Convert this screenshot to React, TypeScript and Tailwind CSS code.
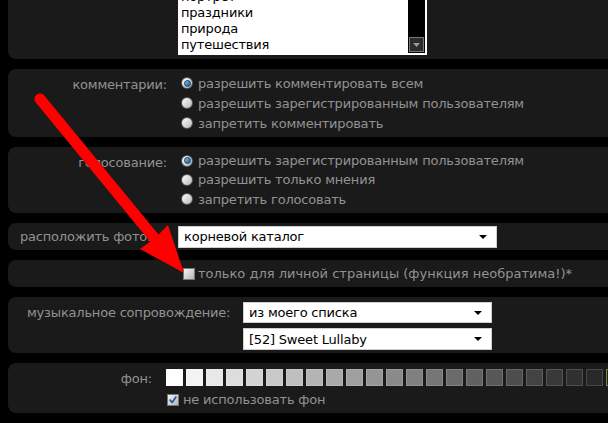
import React from "react";

const swatches = [
  "#ffffff", "#f3f3f3", "#e8e8e8", "#dddddd", "#d3d3d3", "#c9c9c9", "#bfbfbf", "#b4b4b4",
  "#a9a9a9", "#9f9f9f", "#959595", "#8a8a8a", "#808080", "#767676", "#6b6b6b", "#616161",
  "#575757", "#4d4d4d", "#434343", "#393939", "#303030", "#292929",
];

const Radio = ({ checked = false }: { checked?: boolean }) => (
  <span className="relative inline-flex h-[12px] w-[12px] shrink-0 items-center justify-center rounded-full border border-[#555] bg-gradient-to-br from-white to-[#b8b8b8]">
    {checked && (
      <span className="h-[7px] w-[7px] rounded-full border border-[#0c3d66] bg-gradient-to-br from-[#7cc3f0] to-[#1c5d98]" />
    )}
  </span>
);

const Check = ({ checked = false }: { checked?: boolean }) => (
  <span className="inline-flex h-[12px] w-[12px] shrink-0 items-center justify-center border border-[#777] bg-gradient-to-br from-[#f4f4f4] to-[#b5b5b5]">
    {checked && (
      <svg viewBox="0 0 12 12" className="h-[10px] w-[10px]">
        <path d="M2.5 6.2 L5 9 L9.5 2.5" fill="none" stroke="#2a4fa8" strokeWidth={2} strokeLinecap="round" strokeLinejoin="round" />
      </svg>
    )}
  </span>
);

const Select = ({ value, className }: { value: string; className: string }) => (
  <div className={`flex shrink-0 items-center justify-between border border-[#cfcfcf] bg-white pl-[5px] pr-[9px] text-[13px] text-black ${className}`}>
    <span>{value}</span>
    <svg viewBox="0 0 8 4" className="h-[4px] w-[8px]">
      <path d="M0 0 H8 L4 4 Z" fill="#000" />
    </svg>
  </div>
);

const RadioRow = ({ text, checked }: { text: string; checked?: boolean }) => (
  <div className="flex h-[20px] items-center gap-[5px] whitespace-nowrap">
    <Radio checked={checked} />
    <span>{text}</span>
  </div>
);

export default function App() {
  return (
    <div
      className="relative h-[423px] w-[608px] overflow-hidden bg-black text-[13px] leading-none tracking-[-0.2px] text-[#929292]"
      style={{ fontFamily: '"DejaVu Sans", Verdana, sans-serif' }}
    >
      <div className="flex flex-col gap-[10px] pl-[8px]">
        {/* category list */}
        <div className="-mt-[20px] flex h-[79px] items-end rounded-l-lg bg-[#1a1a1a] pb-[4px] pl-[170px]">
          <div className="flex h-[90px] w-[249px] border-[2px] border-white bg-white">
            <div className="flex flex-1 flex-col justify-end pl-[1px] pb-[1px] text-black">
              {["пейзаж", "портрет", "праздники", "природа", "путешествия"].map((t) => (
                <div key={t} className="flex h-[16px] items-center">
                  {t}
                </div>
              ))}
            </div>
            <div className="flex w-[17px] flex-col justify-end bg-black pb-[1px] pl-[1px]">
              <div className="flex h-[15px] w-[15px] items-center justify-center border border-[#7a7a7a] bg-[#2c2c2c]">
                <svg viewBox="0 0 7 4" className="h-[4px] w-[7px]">
                  <path d="M0 0 H7 L3.5 4 Z" fill="#9a9a9a" />
                </svg>
              </div>
            </div>
          </div>
        </div>

        {/* comments */}
        <div className="flex h-[68px] rounded-l-lg bg-[#1a1a1a] py-[4px]">
          <div className="w-[159px] shrink-0 pt-[5px] text-right">комментарии:</div>
          <div className="ml-[14px] flex flex-col">
            <RadioRow text="разрешить комментировать всем" checked />
            <RadioRow text="разрешить зарегистрированным пользователям" />
            <RadioRow text="запретить комментировать" />
          </div>
        </div>

        {/* voting */}
        <div className="flex h-[66px] rounded-l-lg bg-[#1a1a1a] py-[4px]">
          <div className="w-[159px] shrink-0 pt-[5px] text-right">голосование:</div>
          <div className="ml-[14px] flex flex-col">
            <RadioRow text="разрешить зарегистрированным пользователям" checked />
            <RadioRow text="разрешить только мнения" />
            <RadioRow text="запретить голосовать" />
          </div>
        </div>

        {/* album */}
        <div className="flex h-[27px] items-center rounded-l-lg bg-[#1a1a1a] pl-[12px]">
          <div className="w-[158px] shrink-0 whitespace-nowrap">расположить фото:</div>
          <Select value="корневой каталог" className="h-[22px] w-[319px]" />
        </div>

        {/* private */}
        <div className="flex h-[27px] items-center gap-[3px] whitespace-nowrap rounded-l-lg bg-[#1a1a1a] pl-[175px]">
          <Check />
          <span className="tracking-normal">только для личной страницы (функция необратима!)*</span>
        </div>

        {/* music */}
        <div className="flex h-[56px] rounded-l-lg bg-[#1a1a1a] pl-[19px] pt-[5px]">
          <div className="w-[216px] shrink-0 whitespace-nowrap pt-[4px]">музыкальное сопровождение:</div>
          <div className="flex flex-col gap-[5px]">
            <Select value="из моего списка" className="h-[21px] w-[249px]" />
            <Select value="[52] Sweet Lullaby" className="h-[22px] w-[249px]" />
          </div>
        </div>

        {/* background */}
        <div className="flex h-[50px] rounded-l-lg bg-[#1a1a1a] pt-[6px]">
          <div className="w-[144px] shrink-0 pt-[3px] text-right">фон:</div>
          <div className="ml-[14px] flex shrink-0 flex-col gap-[7px]">
            <div className="flex gap-[3px]">
              {swatches.map((c) => (
                <span
                  key={c}
                  className="h-[17px] w-[17px] shrink-0 border border-white/15"
                  style={{ backgroundColor: c }}
                />
              ))}
              <span className="h-[17px] w-[17px] shrink-0 border border-[#6a8a3a] bg-[#232323]" />
            </div>
            <div className="flex items-center gap-[4px] whitespace-nowrap pl-[1px]">
              <Check checked />
              <span>не использовать фон</span>
            </div>
          </div>
        </div>
      </div>

      {/* red arrow */}
      <svg className="pointer-events-none absolute left-0 top-0" width={608} height={423} viewBox="0 0 608 423">
        <line x1={40} y1={99} x2={160} y2={245} stroke="#ff0000" strokeWidth={11} strokeLinecap="round" />
        <path d="M184 273 L140 249 L155 238 L168 225 Z" fill="#ff0000" />
      </svg>
    </div>
  );
}
